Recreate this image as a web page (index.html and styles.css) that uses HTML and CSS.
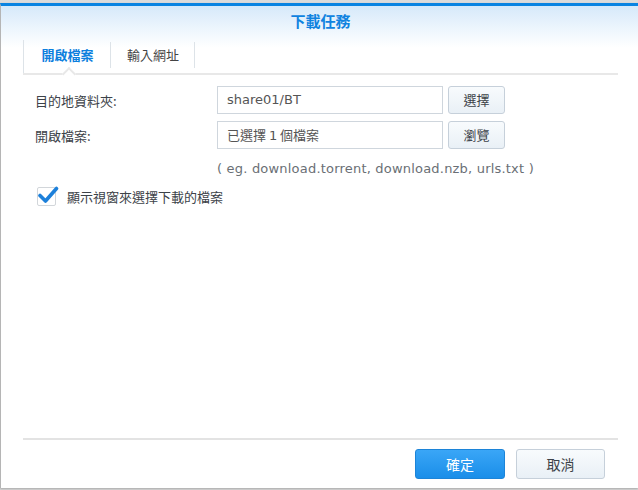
FILE: index.html
```html
<!DOCTYPE html>
<html lang="zh-Hant">
<head>
<meta charset="utf-8">
<link rel="stylesheet" href="styles.css">
</head>
<body>
<div class="page">
  <div class="window">
    <div class="header">
      <div class="title">下載任務</div>
      <div class="tabs">
        <div class="tab active">開啟檔案</div>
        <div class="tab">輸入網址</div>
      </div>
    </div>
    <div class="content">
      <div class="form">
        <div class="label">目的地資料夾:</div>
        <div class="input latin">share01/BT</div>
        <div class="btn">選擇</div>
        <div class="label">開啟檔案:</div>
        <div class="input">已選擇 <span class="latin">1</span> 個檔案</div>
        <div class="btn">瀏覽</div>
        <div class="hint latin">( eg. download.torrent, download.nzb, urls.txt )</div>
      </div>
      <label class="check">
        <span class="box"><svg viewBox="0 0 22 20" width="22" height="20"><path d="M3 10.5 L8.5 16 L19.5 3.5" fill="none" stroke="#1d80da" stroke-width="3.6" stroke-linecap="round" stroke-linejoin="round"/></svg></span>
        <span class="check-text">顯示視窗來選擇下載的檔案</span>
      </label>
    </div>
    <div class="footer">
      <div class="btn primary">確定</div>
      <div class="btn wide">取消</div>
    </div>
  </div>
</div>
</body>
</html>
```
FILE: styles.css
```css
* { box-sizing: border-box; }
html, body { margin: 0; padding: 0; }
body {
  width: 638px;
  height: 490px;
  overflow: hidden;
  font-family: "DejaVu Sans", "Noto Sans CJK TC", sans-serif;
  font-size: 13px;
  color: #3a3f45;
}
.page {
  width: 638px;
  height: 490px;
  background: #dcdcdc;
  padding-top: 3px;
}
.window {
  height: 485px;
  background: #fff;
  border-top: 3px solid #0a84e2;
  border-left: 1px solid #b5b5b5;
  display: flex;
  flex-direction: column;
  box-shadow: 0 1px 2px rgba(0,0,0,0.25);
}
.header {
  background: linear-gradient(#d6e9fa 0px, #ecf5fd 22px, #ffffff 42px);
  padding: 0 20px 0 22px;
}
.title {
  height: 34px;
  line-height: 30px;
  text-align: center;
  font-family: "Noto Sans CJK TC", sans-serif;
  font-size: 15px;
  font-weight: bold;
  color: #1083e0;
}
.tabs {
  display: flex;
  height: 35px;
  border-bottom: 2px solid #e8e8e8;
  position: relative;
}
.tab {
  position: relative;
  height: 33px;
  line-height: 30px;
  font-family: "Noto Sans CJK TC", sans-serif;
  font-size: 13px;
  color: #444;
  text-align: center;
}
.tab::after {
  content: "";
  position: absolute;
  right: 0;
  top: 2px;
  height: 26px;
  border-right: 1px solid #dde3e8;
}
.tab.active {
  width: 88px;
  color: #0c80de;
  font-weight: bold;
  border-left: 1px solid #dde3e8;
}
.tab.active::before {
  content: "";
  position: absolute;
  left: 40px;
  bottom: -6px;
  width: 8px;
  height: 8px;
  background: #fff;
  border-left: 2px solid #e8e8e8;
  border-top: 2px solid #e8e8e8;
  transform: rotate(45deg);
}
.tab:not(.active) { width: 84px; }
.content {
  flex: 1;
  padding: 11px 0 0 34px;
}
.form {
  display: grid;
  grid-template-columns: 177px 226px 57px;
  column-gap: 5px;
  row-gap: 7px;
  align-items: center;
}
.label {
  font-family: "Noto Sans CJK TC", sans-serif;
  color: #3c4248;
}
.input {
  height: 28px;
  border: 1px solid #cfd6dd;
  padding: 0 9px;
  line-height: 26px;
  font-family: "Noto Sans CJK TC", sans-serif;
  color: #555;
  background: #fff;
}
.latin {
  font-family: "DejaVu Sans", "Noto Sans CJK TC", sans-serif;
  font-size: 13px;
}
.hint {
  grid-column: 2 / 4;
  color: #6a6f75;
  margin-top: 5px;
  white-space: nowrap;
  letter-spacing: 0.2px;
}
.btn {
  height: 28px;
  border: 1px solid #c6d0da;
  border-radius: 3px;
  background: linear-gradient(#f8fbfd, #e9f0f6);
  text-align: center;
  line-height: 26px;
  font-family: "Noto Sans CJK TC", sans-serif;
  color: #3c4248;
}
.check {
  display: flex;
  align-items: center;
  margin-top: 11px;
  margin-left: 2px;
}
.box {
  position: relative;
  width: 19px;
  height: 19px;
  border: 1px solid #d2d6da;
  border-radius: 2px;
  background: #fff;
}
.box svg {
  position: absolute;
  left: -1px;
  top: -3px;
}
.check-text {
  margin-left: 11px;
  font-family: "Noto Sans CJK TC", sans-serif;
  color: #3c4248;
}
.footer {
  margin: 0 20px 0 22px;
  border-top: 2px solid #e3e3e3;
  height: 50px;
  display: flex;
  justify-content: flex-end;
  align-items: flex-start;
  padding-top: 9px;
  padding-right: 13px;
  gap: 11px;
}
.footer .btn {
  width: 90px;
  height: 30px;
  line-height: 28px;
  font-size: 14px;
}
.btn.primary {
  background: linear-gradient(#3aa6f7, #1a8ee9);
  border-color: #1c84d8;
  color: #fff;
}
.btn.wide { width: 89px; }
```
